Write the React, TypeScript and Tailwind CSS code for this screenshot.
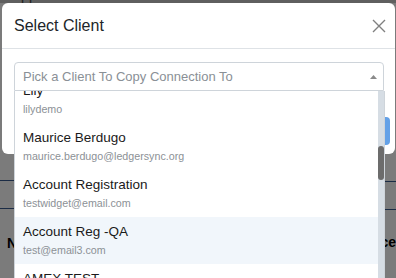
const clients = [
  { name: 'Lily', email: 'lilydemo' },
  { name: 'Maurice Berdugo', email: 'maurice.berdugo@ledgersync.org' },
  { name: 'Account Registration', email: 'testwidget@email.com' },
  { name: 'Account Reg -QA', email: 'test@email3.com', active: true },
  { name: 'AMEX TEST', email: 'amex.test@email.com' },
];

export default function App() {
  return (
    <div className="relative h-[278px] w-[396px] overflow-hidden bg-[#7b7b7b] font-['Liberation_Sans',Arial,sans-serif]">
      {/* page behind the backdrop */}
      <div className="flex h-full flex-col">
        <div className="h-[3px] overflow-hidden bg-[#5f5f5f] pl-[4px]">
          <div className="-mt-[13px] whitespace-nowrap text-[14px] leading-[16px] text-[#1c1c1c]">Support</div>
        </div>
        <div className="flex flex-1">
          <div className="w-[15px] overflow-hidden">
            <div className="mt-[177px] h-px bg-[#1b2c45]" />
            <div className="mt-[27px] h-px bg-[#1b2c45]" />
            <div className="mt-[26px] whitespace-nowrap pl-[7px] text-[14px] font-bold leading-[16px] text-black">Name</div>
          </div>
          <div className="flex-1" />
          <div className="w-[11px] overflow-hidden">
            <div className="mt-[178px] h-px bg-[#1b2c45]" />
            <div className="mt-[27px] h-px bg-[#1b2c45]" />
            <div className="mt-[24px] flex justify-end whitespace-nowrap text-[14px] font-bold leading-[16px] text-black">Balance</div>
          </div>
        </div>
      </div>

      {/* modal */}
      <div className="absolute left-[2px] top-[3px] h-[151px] w-[393px] rounded-[6px] bg-white">
        <div className="flex h-[46px] items-center justify-between border-b border-[#dee2e6] pl-[12px] pr-[9px]">
          <h5 className="text-[16px] font-medium leading-[20px] text-[#212529]">Select Client</h5>
          <button className="flex h-[14px] w-[14px] items-center justify-center">
            <svg width="14" height="14" viewBox="0 0 14 14" fill="none" stroke="#808080" strokeWidth="1.4">
              <path d="M1 1L13 13M13 1L1 13" />
            </svg>
          </button>
        </div>
        <div className="pt-[13px]">
          <div className="ml-[12px] mr-[11px] flex h-[29px] items-center justify-between rounded-t-[4px] border border-[#ced4da] pl-[8px] pr-[6px]">
            <span className="whitespace-nowrap text-[13px] text-[#8a9096]">Pick a Client To Copy Connection To</span>
            <svg width="7" height="4" viewBox="0 0 7 4">
              <path d="M0 4L3.5 0L7 4Z" fill="#8a8a8a" />
            </svg>
          </div>
          <div className="mt-[26px] flex justify-end pr-[5px]">
            <button className="h-[28px] w-[80px] rounded-[4px] bg-[#64a1e7]" />
          </div>
        </div>
      </div>

      {/* open dropdown list */}
      <div className="absolute bottom-0 left-[14px] top-[91px] flex w-[371px] border-l border-r border-[#ced4da] bg-white">
        <div className="flex-1 overflow-hidden">
          <div className="-mt-[15px]">
            {clients.map((c) => (
              <div
                key={c.name}
                className={`h-[47px] pl-[8px] pt-[7px] ${c.active ? 'bg-[#f1f6fb]' : ''}`}
              >
                <div className="whitespace-nowrap text-[13.5px] leading-[16px] text-[#1a1a1a]">{c.name}</div>
                <div className="mt-[3px] whitespace-nowrap text-[10.7px] leading-[14px] text-[#8c9196]">{c.email}</div>
              </div>
            ))}
          </div>
        </div>
        <div className="w-[6px] bg-[#d6dde4] pt-[55px]">
          <div className="h-[34px] rounded-[3px] bg-[#6c6c6c]" />
        </div>
      </div>
    </div>
  );
}
